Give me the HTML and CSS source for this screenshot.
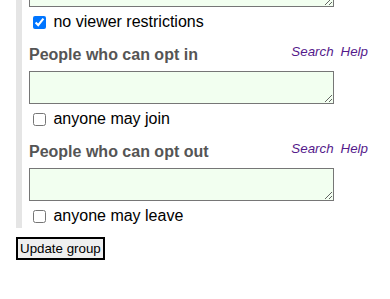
FILE: index.html
```html
<!DOCTYPE html>
<html>
<head>
<meta charset="utf-8">
<link rel="stylesheet" href="styles.css">
</head>
<body>
<div class="page">
  <div class="group">
    <div class="field first">
      <textarea class="box"></textarea>
      <label class="check"><input type="checkbox" checked> no viewer restrictions</label>
    </div>
    <div class="field">
      <div class="head">
        <span class="label">People who can opt in</span>
        <span class="links"><a class="link">Search</a><a class="link">Help</a></span>
      </div>
      <textarea class="box"></textarea>
      <label class="check"><input type="checkbox"> anyone may join</label>
    </div>
    <div class="field">
      <div class="head">
        <span class="label">People who can opt out</span>
        <span class="links"><a class="link">Search</a><a class="link">Help</a></span>
      </div>
      <textarea class="box"></textarea>
      <label class="check"><input type="checkbox"> anyone may leave</label>
    </div>
  </div>
  <button class="submit" type="button">Update group</button>
</div>
</body>
</html>
```
FILE: styles.css
```css
html, body {
  margin: 0;
  padding: 0;
  background: #ffffff;
}
body {
  font-family: "Liberation Sans", Arial, sans-serif;
  font-size: 16px;
  color: #000;
}
.page {
  padding-left: 16px;
}
.group {
  width: 352px;
  box-sizing: border-box;
  border-left: 6px solid #e5e5e5;
  padding: 0 0 3px 7px;
  margin-top: -26px;
}
.field {
  margin-bottom: 15px;
}
.field:last-child {
  margin-bottom: 0;
}
.head {
  display: flex;
  justify-content: space-between;
  align-items: flex-start;
  margin-bottom: 7px;
}
.label {
  font-weight: bold;
  color: #555555;
  line-height: 18px;
}
.links {
  display: flex;
  gap: 7px;
  font-size: 13.33px;
  line-height: 15px;
  margin-top: -2px;
  font-style: italic;
}
.link {
  color: #551a8b;
}
.box {
  display: block;
  width: 305px;
  height: 33px;
  box-sizing: border-box;
  margin: 0;
  border: 1px solid #767676;
  background: #f2fff0;
  resize: vertical;
}
.check {
  display: flex;
  align-items: center;
  margin-top: 6px;
  line-height: 18px;
  white-space: pre;
}
.check input {
  margin: 0 3px 0 4px;
  width: 13px;
  height: 13px;
}
.submit {
  display: block;
  margin-top: 9px;
  font-family: "Liberation Sans", Arial, sans-serif;
  font-size: 13.33px;
  height: 23px;
  padding: 0 2px;
  border: 2px solid #000;
  background: #efefef;
  color: #000;
}
```
